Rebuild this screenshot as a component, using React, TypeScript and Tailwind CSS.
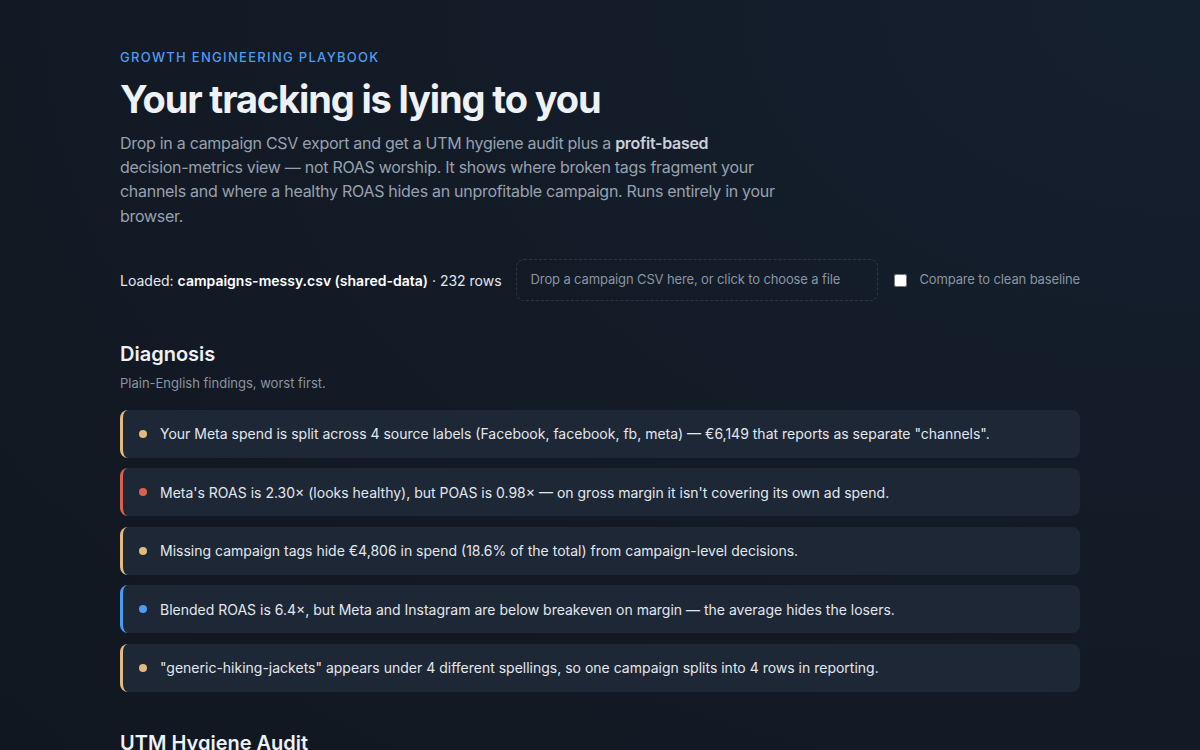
import React from "react";

type Severity = "warn" | "bad" | "info";

interface Finding {
  severity: Severity;
  text: string;
}

const findings: Finding[] = [
  {
    severity: "warn",
    text: 'Your Meta spend is split across 4 source labels (Facebook, facebook, fb, meta) — €6,149 that reports as separate "channels".',
  },
  {
    severity: "bad",
    text: "Meta's ROAS is 2.30× (looks healthy), but POAS is 0.98× — on gross margin it isn't covering its own ad spend.",
  },
  {
    severity: "warn",
    text: "Missing campaign tags hide €4,806 in spend (18.6% of the total) from campaign-level decisions.",
  },
  {
    severity: "info",
    text: "Blended ROAS is 6.4×, but Meta and Instagram are below breakeven on margin — the average hides the losers.",
  },
  {
    severity: "warn",
    text: '"generic-hiking-jackets" appears under 4 different spellings, so one campaign splits into 4 rows in reporting.',
  },
];

const borderFor: Record<Severity, string> = {
  warn: "border-l-[#e2b97f]",
  bad: "border-l-[#d9614f]",
  info: "border-l-[#4f9bf0]",
};

const dotFor: Record<Severity, string> = {
  warn: "bg-[#e2b97f]",
  bad: "bg-[#d9614f]",
  info: "bg-[#4f9bf0]",
};

export default function App() {
  return (
    <div
      className="min-h-screen bg-[#111720] bg-[radial-gradient(ellipse_at_top_right,#15202f_0%,#131b27_45%,#111720_100%)] text-gray-200"
      style={{ fontFamily: "Inter, 'Noto Sans', sans-serif" }}
    >
      <div className="mx-auto w-[960px] pt-[48px] pb-16">
        {/* Header */}
        <p className="text-[13px] font-medium uppercase tracking-[0.1em] text-[#4f9bf0]">
          Growth Engineering Playbook
        </p>
        <h1 className="mt-[8px] text-[38px] font-bold leading-[46px] tracking-[-0.03em] text-[#eef1f6]">
          Your tracking is lying to you
        </h1>
        <p className="mt-[9px] max-w-[655px] text-[16px] leading-[24.4px] tracking-[-0.018em] text-[#97a1b0]">
          Drop in a campaign CSV export and get a UTM hygiene audit plus a{" "}
          <strong className="font-semibold text-[#c9d0da]">profit-based</strong>{" "}
          decision-metrics view — not ROAS worship. It shows where broken tags fragment your
          channels and where a healthy ROAS hides an unprofitable campaign. Runs entirely in your
          browser.
        </p>

        {/* Loader row */}
        <div className="mt-[31px] flex items-center">
          <p className="text-[14px] text-[#e3e7ee]">
            Loaded: <span className="font-semibold text-white">campaigns-messy.csv (shared-data)</span> · 232 rows
          </p>
          <div className="ml-[14px] flex h-[42px] w-[362px] cursor-pointer items-center rounded-lg border border-dashed border-[#2c3645] px-[14px] text-[13px] tracking-[-0.01em] text-[#8a94a3]">
            Drop a campaign CSV here, or click to choose a file
          </div>
          <label className="ml-auto flex items-center gap-[12px] text-[13px] tracking-[-0.01em] text-[#8a94a3]">
            <input type="checkbox" className="h-[13px] w-[13px] accent-white" />
            Compare to clean baseline
          </label>
        </div>

        {/* Diagnosis */}
        <h2 className="mt-[38px] text-[20px] font-semibold text-[#eef1f6]">Diagnosis</h2>
        <p className="mt-[5px] text-[13px] text-[#8a94a3]">Plain-English findings, worst first.</p>

        <div className="mt-[16px] flex flex-col gap-[10.5px]">
          {findings.map((f, i) => (
            <div
              key={i}
              className={`flex h-[48px] items-center gap-[13px] rounded-lg border-l-[3px] bg-[#1d2735] pl-[16px] pr-4 ${borderFor[f.severity]}`}
            >
              <span className={`h-[8px] w-[8px] shrink-0 rounded-full ${dotFor[f.severity]}`} />
              <span className="text-[14px] text-[#e3e7ee]">{f.text}</span>
            </div>
          ))}
        </div>

        {/* UTM audit */}
        <h2 className="mt-[36px] text-[20px] font-semibold text-[#eef1f6]">UTM Hygiene Audit</h2>
      </div>
    </div>
  );
}
